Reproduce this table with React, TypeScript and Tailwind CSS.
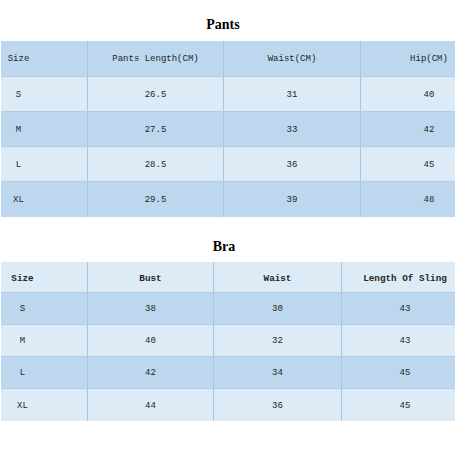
import React from "react";

type Col = { w: string; cell: string };

const dark = "bg-[#bdd7ee]";
const light = "bg-[#ddebf7]";

const pantsCols: Col[] = [
  { w: "w-[87px]", cell: "pr-[51px]" },
  { w: "w-[136px]", cell: "" },
  { w: "w-[137px]", cell: "" },
  { w: "w-[94px]", cell: "pl-[42px]" },
];

const braCols: Col[] = [
  { w: "w-[87px]", cell: "pr-[43px]" },
  { w: "w-[126px]", cell: "" },
  { w: "w-[128px]", cell: "" },
  { w: "w-[113px]", cell: "pl-[13px]" },
];

const pants = {
  head: ["Size", "Pants Length(CM)", "Waist(CM)", "Hip(CM)"],
  rows: [
    ["S", "26.5", "31", "40"],
    ["M", "27.5", "33", "42"],
    ["L", "28.5", "36", "45"],
    ["XL", "29.5", "39", "48"],
  ],
};

const bra = {
  head: ["Size", "Bust", "Waist", "Length Of Sling"],
  rows: [
    ["S", "38", "30", "43"],
    ["M", "40", "32", "43"],
    ["L", "42", "34", "45"],
    ["XL", "44", "36", "45"],
  ],
};

function Row({ cols, values, height, bg, bold }: { cols: Col[]; values: string[]; height: string; bg: string; bold?: boolean }) {
  return (
    <div className={`flex ${height} ${bg} border-b border-[#aecbe8] last:border-b-0`}>
      {values.map((v, i) => (
        <div
          key={i}
          className={`${cols[i].w} ${cols[i].cell} pt-[3px] flex items-center justify-center whitespace-pre ${
            i < values.length - 1 ? "border-r border-[#a8c7e6]" : ""
          } ${bold ? "font-bold text-[9.3px]" : "text-[9px]"}`}
        >
          {v}
        </div>
      ))}
    </div>
  );
}

export default function App() {
  return (
    <div className="w-[470px] h-[452px] bg-white text-[#262626] font-['Liberation_Mono',monospace]">
      <div className="ml-px w-[454px]">
        <div className="h-[41px] flex items-center justify-center pt-[9px] pr-[10px]">
          <h2 className="font-['Liberation_Serif',serif] font-bold text-[14px] leading-[16px] text-black">Pants</h2>
        </div>
        <div>
          <Row cols={pantsCols} values={pants.head} height="h-[36px]" bg={dark} />
          {pants.rows.map((r, i) => (
            <Row key={r[0]} cols={pantsCols} values={r} height="h-[35px]" bg={i % 2 === 0 ? light : dark} />
          ))}
        </div>
        <div className="h-[45px] flex items-center justify-center pt-[14px] pr-[8px]">
          <h2 className="font-['Liberation_Serif',serif] font-bold text-[14px] leading-[16px] text-black">Bra</h2>
        </div>
        <div>
          <Row cols={braCols} values={bra.head} height="h-[31px]" bg={light} bold />
          {bra.rows.map((r, i) => (
            <Row key={r[0]} cols={braCols} values={r} height="h-[32px]" bg={i % 2 === 0 ? dark : light} />
          ))}
        </div>
      </div>
    </div>
  );
}
